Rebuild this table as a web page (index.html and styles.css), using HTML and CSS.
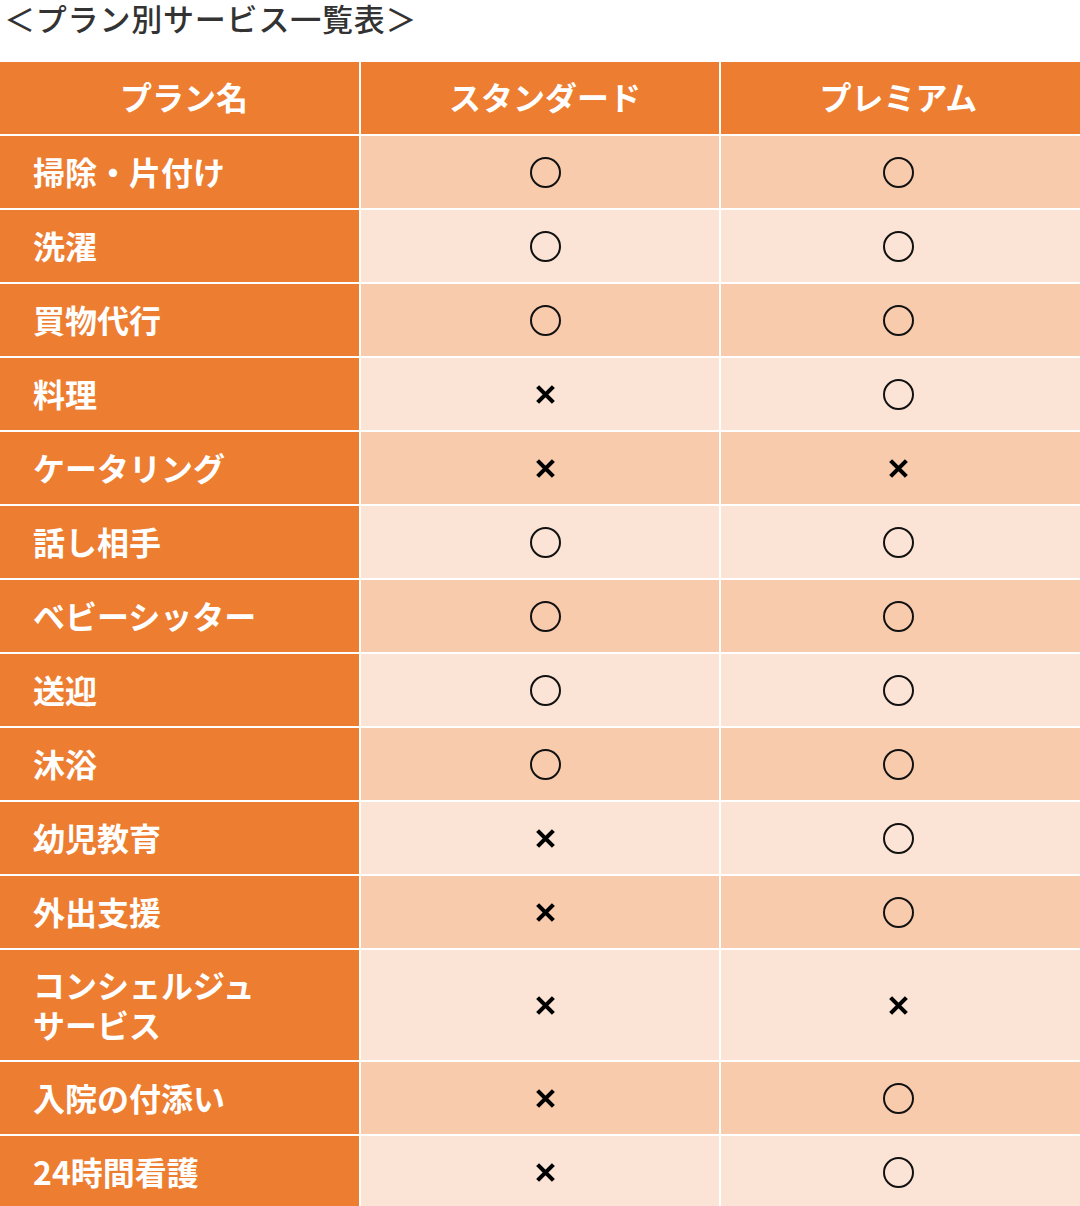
FILE: index.html
```html
<!DOCTYPE html>
<html lang="ja">
<head>
<meta charset="utf-8">
<link rel="stylesheet" href="styles.css">
</head>
<body>
<h1 class="title">＜プラン別サービス一覧表＞</h1>
<div class="table">
  <div class="cell head c1">プラン名</div>
  <div class="cell head c2">スタンダード</div>
  <div class="cell head c3">プレミアム</div>

  <div class="cell name">掃除・片付け</div>
  <div class="cell dark c2"><span class="ok"></span></div>
  <div class="cell dark c3"><span class="ok"></span></div>

  <div class="cell name">洗濯</div>
  <div class="cell light c2"><span class="ok"></span></div>
  <div class="cell light c3"><span class="ok"></span></div>

  <div class="cell name">買物代行</div>
  <div class="cell dark c2"><span class="ok"></span></div>
  <div class="cell dark c3"><span class="ok"></span></div>

  <div class="cell name">料理</div>
  <div class="cell light c2"><svg class="ng" viewBox="0 0 20 20"><path d="M2.5 2.5L17.5 17.5M17.5 2.5L2.5 17.5"/></svg></div>
  <div class="cell light c3"><span class="ok"></span></div>

  <div class="cell name">ケータリング</div>
  <div class="cell dark c2"><svg class="ng" viewBox="0 0 20 20"><path d="M2.5 2.5L17.5 17.5M17.5 2.5L2.5 17.5"/></svg></div>
  <div class="cell dark c3"><svg class="ng" viewBox="0 0 20 20"><path d="M2.5 2.5L17.5 17.5M17.5 2.5L2.5 17.5"/></svg></div>

  <div class="cell name">話し相手</div>
  <div class="cell light c2"><span class="ok"></span></div>
  <div class="cell light c3"><span class="ok"></span></div>

  <div class="cell name">ベビーシッター</div>
  <div class="cell dark c2"><span class="ok"></span></div>
  <div class="cell dark c3"><span class="ok"></span></div>

  <div class="cell name">送迎</div>
  <div class="cell light c2"><span class="ok"></span></div>
  <div class="cell light c3"><span class="ok"></span></div>

  <div class="cell name">沐浴</div>
  <div class="cell dark c2"><span class="ok"></span></div>
  <div class="cell dark c3"><span class="ok"></span></div>

  <div class="cell name">幼児教育</div>
  <div class="cell light c2"><svg class="ng" viewBox="0 0 20 20"><path d="M2.5 2.5L17.5 17.5M17.5 2.5L2.5 17.5"/></svg></div>
  <div class="cell light c3"><span class="ok"></span></div>

  <div class="cell name">外出支援</div>
  <div class="cell dark c2"><svg class="ng" viewBox="0 0 20 20"><path d="M2.5 2.5L17.5 17.5M17.5 2.5L2.5 17.5"/></svg></div>
  <div class="cell dark c3"><span class="ok"></span></div>

  <div class="cell name tall">コンシェルジュ<br>サービス</div>
  <div class="cell light c2"><svg class="ng" viewBox="0 0 20 20"><path d="M2.5 2.5L17.5 17.5M17.5 2.5L2.5 17.5"/></svg></div>
  <div class="cell light c3"><svg class="ng" viewBox="0 0 20 20"><path d="M2.5 2.5L17.5 17.5M17.5 2.5L2.5 17.5"/></svg></div>

  <div class="cell name">入院の付添い</div>
  <div class="cell dark c2"><svg class="ng" viewBox="0 0 20 20"><path d="M2.5 2.5L17.5 17.5M17.5 2.5L2.5 17.5"/></svg></div>
  <div class="cell dark c3"><span class="ok"></span></div>

  <div class="cell name">24時間看護</div>
  <div class="cell light c2"><svg class="ng" viewBox="0 0 20 20"><path d="M2.5 2.5L17.5 17.5M17.5 2.5L2.5 17.5"/></svg></div>
  <div class="cell light c3"><span class="ok"></span></div>
</div>
</body>
</html>
```

FILE: styles.css
```css
html, body {
  margin: 0;
  padding: 0;
  background: #ffffff;
}
body {
  width: 1080px;
  font-family: "Noto Sans CJK JP", "Noto Sans", sans-serif;
}
.title {
  margin: 0 0 26px 0;
  padding-left: 4px;
  font-size: 31px;
  line-height: 36px;
  font-weight: 500;
  color: #333333;
  letter-spacing: 0.8px;
}
.table {
  display: grid;
  grid-template-columns: 359px 358px 359px;
  column-gap: 2px;
  row-gap: 2px;
}
.cell {
  min-height: 72px;
  display: flex;
  align-items: center;
  box-sizing: border-box;
}
.head {
  background: #ed7d31;
  color: #ffffff;
  font-weight: 700;
  font-size: 32px;
  justify-content: center;
  padding-bottom: 4px;
}
.head.c1 { padding-left: 9px; }
.c2 { justify-content: center; padding-left: 10px; }
.c3 { justify-content: center; padding-right: 4px; }
.name {
  background: #ed7d31;
  color: #ffffff;
  font-weight: 700;
  font-size: 32px;
  line-height: 40px;
  padding-left: 33px;
  padding-bottom: 3px;
}
.tall {
  min-height: 110px;
  padding-top: 0;
}
.dark { background: #f8cbad; }
.light { background: #fbe4d5; }
.ok {
  display: block;
  width: 31px;
  height: 31px;
  border: 2px solid #111111;
  border-radius: 50%;
  box-sizing: border-box;
}
.ng {
  display: block;
  width: 21px;
  height: 21px;
  stroke: #000000;
  stroke-width: 4;
  fill: none;
}
```
